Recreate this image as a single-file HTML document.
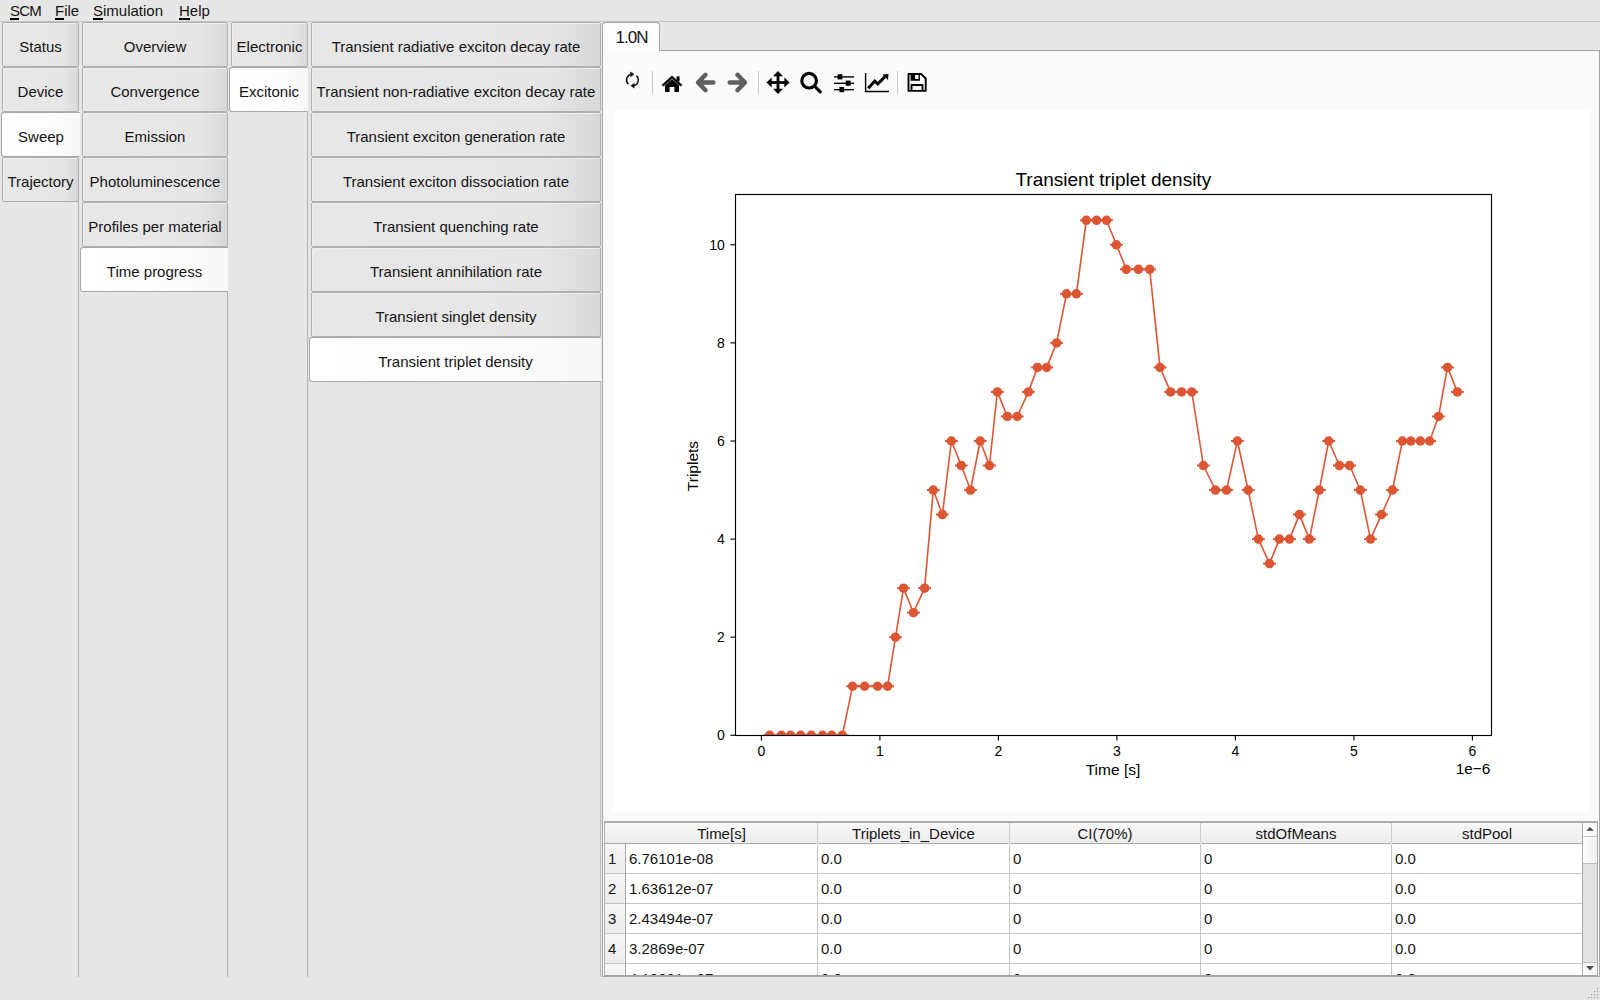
<!DOCTYPE html>
<html><head><meta charset="utf-8">
<style>
*{margin:0;padding:0;box-sizing:border-box}
html,body{width:1600px;height:1000px;overflow:hidden;background:#e6e6e6;font-family:"Liberation Sans",sans-serif;color:#141414}
#menubar{position:absolute;left:0;top:0;width:1600px;height:22px;background:#e6e6e6;border-bottom:1px solid #c4c4c4}
#menubar span{position:absolute;top:2px;font-size:15px;line-height:17px}
#menubar u{text-decoration:none;border-bottom:2px solid #000;display:inline-block;line-height:14px}
.tab{position:absolute;border:1px solid #b0b0b0;border-radius:2px;box-shadow:inset 1px 1px 0 #efefef;background:linear-gradient(to right,#e7e7e7 0%,#e6e6e6 80%,#d8d8d8 100%);display:flex;align-items:center;justify-content:center;font-size:15px;white-space:nowrap}
.tab span{position:relative;top:2px}
.tab.sel{background:linear-gradient(to right,#ffffff 0%,#fcfcfc 70%,#f7f7f7 100%);border-color:#a8a8a8;border-right:none;border-radius:3px 0 0 3px;box-shadow:none}
.vline{position:absolute;width:1px;background:#b2b2b2}
#panel{position:absolute;left:602px;top:50px;width:998px;height:927px;background:#fafafa;border:1px solid #a6a6a6}
#ptab{position:absolute;left:602px;top:22px;width:58px;height:29px;background:#fdfdfd;border:1px solid #a6a6a6;border-bottom:none;border-radius:4px 4px 0 0;font-size:17px;letter-spacing:-1px;text-align:center;line-height:28px;padding-top:1px;padding-left:1px}
#chart{position:absolute;left:613px;top:110px;width:976px;height:702px;background:#fff}
#table{position:absolute;left:604px;top:821px;width:994px;height:155px;border-left:1px solid #b0b0b0;border-right:1px solid #a8a8a8;border-top:2px solid #acacac;border-bottom:1px solid #a4a4a4;background:#fff;overflow:hidden}
.th{position:absolute;top:0;height:21px;font-size:15px;text-align:center;line-height:22px;background:linear-gradient(#f8f8f8,#ececec);border-bottom:1px solid #aaaaaa;white-space:nowrap}
.thsep{position:absolute;top:0;width:1px;height:20px;background:#cfcfcf}
.rh{position:absolute;left:0;width:20px;height:30px;background:linear-gradient(#f6f6f6,#ebebeb);font-size:15px;line-height:30px;padding-left:3px}
.td{position:absolute;height:29px;font-size:15px;line-height:30px;padding-left:3px;white-space:nowrap}
.hl{position:absolute;left:0;width:977px;height:1px;background:#c6c6c6}
.vl{position:absolute;top:21px;width:1px;height:140px;background:#c6c6c6}
#thcorner{display:none}
#sb{position:absolute;left:977px;top:0;width:15px;height:154px;background:#e2e2e2;border-left:1px solid #ababab}
#sb .b1{position:absolute;left:0;top:0;width:14px;height:14px;background:linear-gradient(to right,#fdfdfd,#f2f2f2);border-bottom:1px solid #c4c4c4}
#sb .h{position:absolute;left:0;top:14px;width:14px;height:27px;background:linear-gradient(to right,#fdfdfd,#f0f0f0);border-bottom:1px solid #c0c0c0}
#sb .b2{position:absolute;left:0;top:139px;width:14px;height:15px;background:linear-gradient(to right,#fdfdfd,#f2f2f2);border-top:1px solid #c0c0c0}
svg text{font-family:"Liberation Sans",sans-serif}
</style></head><body>
<div id="menubar">
<span style="left:10px;letter-spacing:-0.8px"><u>S</u>CM</span>
<span style="left:55px"><u>F</u>ile</span>
<span style="left:93px"><u>S</u>imulation</span>
<span style="left:179px"><u>H</u>elp</span>
</div>
<div class="vline" style="left:78px;top:200px;height:777px"></div>
<div class="vline" style="left:227px;top:290px;height:687px"></div>
<div class="vline" style="left:307px;top:110px;height:867px"></div>
<div class="vline" style="left:600px;top:380px;height:597px;background:#c0c0c0"></div>
<div class="tab" style="left:2px;top:22px;width:77px;height:45px;"><span>Status</span></div>
<div class="tab" style="left:2px;top:67px;width:77px;height:45px;"><span>Device</span></div>
<div class="tab sel" style="left:1px;top:112px;width:79px;height:45px;"><span>Sweep</span></div>
<div class="tab" style="left:2px;top:157px;width:77px;height:45px;"><span>Trajectory</span></div>
<div class="tab" style="left:82px;top:22px;width:146px;height:45px;"><span>Overview</span></div>
<div class="tab" style="left:82px;top:67px;width:146px;height:45px;"><span>Convergence</span></div>
<div class="tab" style="left:82px;top:112px;width:146px;height:45px;"><span>Emission</span></div>
<div class="tab" style="left:82px;top:157px;width:146px;height:45px;"><span>Photoluminescence</span></div>
<div class="tab" style="left:82px;top:202px;width:146px;height:45px;"><span>Profiles per material</span></div>
<div class="tab sel" style="left:80px;top:247px;width:148px;height:45px;"><span>Time progress</span></div>
<div class="tab" style="left:231px;top:22px;width:77px;height:45px;"><span>Electronic</span></div>
<div class="tab sel" style="left:229px;top:67px;width:79px;height:45px;"><span>Excitonic</span></div>
<div class="tab" style="left:311px;top:22px;width:290px;height:45px;"><span>Transient radiative exciton decay rate</span></div>
<div class="tab" style="left:311px;top:67px;width:290px;height:45px;"><span>Transient non-radiative exciton decay rate</span></div>
<div class="tab" style="left:311px;top:112px;width:290px;height:45px;"><span>Transient exciton generation rate</span></div>
<div class="tab" style="left:311px;top:157px;width:290px;height:45px;"><span>Transient exciton dissociation rate</span></div>
<div class="tab" style="left:311px;top:202px;width:290px;height:45px;"><span>Transient quenching rate</span></div>
<div class="tab" style="left:311px;top:247px;width:290px;height:45px;"><span>Transient annihilation rate</span></div>
<div class="tab" style="left:311px;top:292px;width:290px;height:45px;"><span>Transient singlet density</span></div>
<div class="tab sel" style="left:309px;top:337px;width:292px;height:45px;"><span>Transient triplet density</span></div>
<div id="panel"></div>
<div id="ptab">1.0N</div>
<div id="chart"></div>
<svg style="position:absolute;left:0;top:0" width="1600" height="1000" viewBox="0 0 1600 1000">
 <!-- toolbar -->
 <g fill="none" stroke="#c8c8c8" stroke-width="1"><line x1="652.5" y1="71" x2="652.5" y2="94"/><line x1="758.5" y1="71" x2="758.5" y2="94"/><line x1="897.5" y1="71" x2="897.5" y2="94"/></g>
 <!-- refresh -->
 <g fill="none" stroke="#111" stroke-width="1.5">
  <path d="M628.4,84.3 A5.9,5.9 0 0 1 631.6,74.2"/>
  <path d="M636.35,75.6 A5.9,5.9 0 0 1 633.2,85.8"/>
 </g>
 <g fill="#111"><path d="M630.3,71.6 L634.3,74.3 L630.3,77.3 Z"/><path d="M634.5,82.8 L630.5,85.7 L634.5,88.5 Z"/></g>
 <!-- home -->
 <g fill="#000">
  <path d="M661.6,85 L672,75.6 L682.4,85 L680.6,86.6 L672,78.8 L663.4,86.6 Z"/>
  <rect x="676.6" y="76.4" width="3" height="5"/>
  <path d="M665,85.4 L672,79.3 L679,85.4 L679,92 L674.4,92 L674.4,87 L669.6,87 L669.6,92 L665,92 Z"/>
 </g>
 <!-- back / forward -->
 <g fill="none" stroke="#5f5f5f" stroke-width="4.5" stroke-linecap="round" stroke-linejoin="round">
  <path d="M705.5,74.8 L698,82.5 L705.5,90.2 M698.5,82.5 L713.3,82.5"/>
  <path d="M737.5,74.8 L745,82.5 L737.5,90.2 M744.5,82.5 L729.7,82.5"/>
 </g>
 <!-- move -->
 <g fill="#000">
  <rect x="776.6" y="74" width="2.8" height="17"/>
  <rect x="769.5" y="81.1" width="17" height="2.8"/>
  <path d="M778,71 L783,76.2 L773,76.2 Z"/>
  <path d="M778,94 L783,88.8 L773,88.8 Z"/>
  <path d="M766.5,82.5 L771.7,77.5 L771.7,87.5 Z"/>
  <path d="M789.5,82.5 L784.3,77.5 L784.3,87.5 Z"/>
 </g>
 <!-- zoom -->
 <g fill="none" stroke="#000" stroke-width="3.1" stroke-linecap="round">
  <circle cx="809.1" cy="80.7" r="7.3"/>
  <line x1="814.6" y1="86.2" x2="820.2" y2="91.8"/>
 </g>
 <!-- sliders -->
 <g fill="#000">
  <rect x="834" y="76.2" width="20" height="1.4"/><rect x="837.6" y="74.2" width="4.8" height="5.2"/>
  <rect x="834" y="82.6" width="20" height="1.4"/><rect x="845.8" y="80.6" width="4.8" height="5.2"/>
  <rect x="834" y="89" width="20" height="1.4"/><rect x="839.4" y="87" width="4.8" height="5.2"/>
 </g>
 <!-- edit axes -->
 <g fill="none" stroke="#000">
  <path d="M865.6,73 L865.6,91.5 L889,91.5" stroke-width="1.4"/>
  <path d="M868.2,88.3 L874.8,81.2 L877.8,84 L885,76.6" stroke-width="3"/>
 </g>
 <path d="M882.5,74.5 L888.5,74 L888,80 Z" fill="#000"/>
 <!-- save -->
 <g fill="none" stroke="#000" stroke-width="1.9" stroke-linejoin="round">
  <path d="M908.5,74 L921.2,74 L925.7,78.5 L925.7,90.9 L908.5,90.9 Z"/>
  <path d="M911.5,90.9 L911.5,85 L922.5,85 L922.5,90.9"/>
 </g>
 <path d="M910.6,73.4 L919.9,73.4 L919.9,80.7 L910.6,80.7 Z M915.1,74.6 L918.5,74.6 L918.5,79 L915.1,79 Z" fill="#000" fill-rule="evenodd"/>
 <!-- chart -->
 <text x="1113.3" y="186" font-size="19" text-anchor="middle" fill="#000">Transient triplet density</text>
 <defs><clipPath id="ax"><rect x="735.5" y="194.5" width="756" height="541"/></clipPath></defs>
 <g clip-path="url(#ax)">
 <polyline points="769.7,735.3 781.4,735.3 790.6,735.3 800.7,735.3 811.3,735.3 822.5,735.3 831.7,735.3 842.3,735.3 852.6,686.2 864.6,686.2 877.6,686.2 887.6,686.2 895.5,637.2 903.5,588.1 913.5,612.7 924.6,588.1 933.3,490.0 942.4,514.6 951.4,441.0 961.3,465.5 970.5,490.0 980.2,441.0 989.4,465.5 997.4,391.9 1007.3,416.5 1017.2,416.5 1028.4,391.9 1037.5,367.4 1046.7,367.4 1056.6,342.9 1066.5,293.8 1076.4,293.8 1086.3,220.3 1096.6,220.3 1106.5,220.3 1116.4,244.8 1126.3,269.3 1138.4,269.3 1149.7,269.3 1160.0,367.4 1170.6,391.9 1181.6,391.9 1191.8,391.9 1203.4,465.5 1215.4,490.0 1226.5,490.0 1237.4,441.0 1248.1,490.0 1258.4,539.1 1269.5,563.6 1279.4,539.1 1289.5,539.1 1299.4,514.6 1309.4,539.1 1319.3,490.0 1328.7,441.0 1339.4,465.5 1349.6,465.5 1360.3,490.0 1370.5,539.1 1381.5,514.6 1392.5,490.0 1402.4,441.0 1410.9,441.0 1420.4,441.0 1429.7,441.0 1438.5,416.5 1447.5,367.4 1457.4,391.9" fill="none" stroke="#dd5634" stroke-width="1.6" stroke-linejoin="round"/>
 <g fill="#dd5634"><circle cx="769.70" cy="735.30" r="4.75"/><rect x="763.30" y="734.30" width="12.8" height="2"/><circle cx="781.40" cy="735.30" r="4.75"/><rect x="775.00" y="734.30" width="12.8" height="2"/><circle cx="790.60" cy="735.30" r="4.75"/><rect x="784.20" y="734.30" width="12.8" height="2"/><circle cx="800.70" cy="735.30" r="4.75"/><rect x="794.30" y="734.30" width="12.8" height="2"/><circle cx="811.30" cy="735.30" r="4.75"/><rect x="804.90" y="734.30" width="12.8" height="2"/><circle cx="822.50" cy="735.30" r="4.75"/><rect x="816.10" y="734.30" width="12.8" height="2"/><circle cx="831.70" cy="735.30" r="4.75"/><rect x="825.30" y="734.30" width="12.8" height="2"/><circle cx="842.30" cy="735.30" r="4.75"/><rect x="835.90" y="734.30" width="12.8" height="2"/><circle cx="852.60" cy="686.25" r="4.75"/><rect x="846.20" y="685.25" width="12.8" height="2"/><circle cx="864.60" cy="686.25" r="4.75"/><rect x="858.20" y="685.25" width="12.8" height="2"/><circle cx="877.60" cy="686.25" r="4.75"/><rect x="871.20" y="685.25" width="12.8" height="2"/><circle cx="887.60" cy="686.25" r="4.75"/><rect x="881.20" y="685.25" width="12.8" height="2"/><circle cx="895.50" cy="637.20" r="4.75"/><rect x="889.10" y="636.20" width="12.8" height="2"/><circle cx="903.50" cy="588.15" r="4.75"/><rect x="897.10" y="587.15" width="12.8" height="2"/><circle cx="913.50" cy="612.67" r="4.75"/><rect x="907.10" y="611.67" width="12.8" height="2"/><circle cx="924.60" cy="588.15" r="4.75"/><rect x="918.20" y="587.15" width="12.8" height="2"/><circle cx="933.30" cy="490.05" r="4.75"/><rect x="926.90" y="489.05" width="12.8" height="2"/><circle cx="942.40" cy="514.57" r="4.75"/><rect x="936.00" y="513.57" width="12.8" height="2"/><circle cx="951.40" cy="441.00" r="4.75"/><rect x="945.00" y="440.00" width="12.8" height="2"/><circle cx="961.30" cy="465.52" r="4.75"/><rect x="954.90" y="464.52" width="12.8" height="2"/><circle cx="970.50" cy="490.05" r="4.75"/><rect x="964.10" y="489.05" width="12.8" height="2"/><circle cx="980.20" cy="441.00" r="4.75"/><rect x="973.80" y="440.00" width="12.8" height="2"/><circle cx="989.40" cy="465.52" r="4.75"/><rect x="983.00" y="464.52" width="12.8" height="2"/><circle cx="997.40" cy="391.95" r="4.75"/><rect x="991.00" y="390.95" width="12.8" height="2"/><circle cx="1007.30" cy="416.47" r="4.75"/><rect x="1000.90" y="415.47" width="12.8" height="2"/><circle cx="1017.20" cy="416.47" r="4.75"/><rect x="1010.80" y="415.47" width="12.8" height="2"/><circle cx="1028.40" cy="391.95" r="4.75"/><rect x="1022.00" y="390.95" width="12.8" height="2"/><circle cx="1037.50" cy="367.42" r="4.75"/><rect x="1031.10" y="366.42" width="12.8" height="2"/><circle cx="1046.70" cy="367.42" r="4.75"/><rect x="1040.30" y="366.42" width="12.8" height="2"/><circle cx="1056.60" cy="342.90" r="4.75"/><rect x="1050.20" y="341.90" width="12.8" height="2"/><circle cx="1066.50" cy="293.85" r="4.75"/><rect x="1060.10" y="292.85" width="12.8" height="2"/><circle cx="1076.40" cy="293.85" r="4.75"/><rect x="1070.00" y="292.85" width="12.8" height="2"/><circle cx="1086.30" cy="220.27" r="4.75"/><rect x="1079.90" y="219.27" width="12.8" height="2"/><circle cx="1096.60" cy="220.27" r="4.75"/><rect x="1090.20" y="219.27" width="12.8" height="2"/><circle cx="1106.50" cy="220.27" r="4.75"/><rect x="1100.10" y="219.27" width="12.8" height="2"/><circle cx="1116.40" cy="244.80" r="4.75"/><rect x="1110.00" y="243.80" width="12.8" height="2"/><circle cx="1126.30" cy="269.32" r="4.75"/><rect x="1119.90" y="268.32" width="12.8" height="2"/><circle cx="1138.40" cy="269.32" r="4.75"/><rect x="1132.00" y="268.32" width="12.8" height="2"/><circle cx="1149.70" cy="269.32" r="4.75"/><rect x="1143.30" y="268.32" width="12.8" height="2"/><circle cx="1160.00" cy="367.42" r="4.75"/><rect x="1153.60" y="366.42" width="12.8" height="2"/><circle cx="1170.60" cy="391.95" r="4.75"/><rect x="1164.20" y="390.95" width="12.8" height="2"/><circle cx="1181.60" cy="391.95" r="4.75"/><rect x="1175.20" y="390.95" width="12.8" height="2"/><circle cx="1191.80" cy="391.95" r="4.75"/><rect x="1185.40" y="390.95" width="12.8" height="2"/><circle cx="1203.40" cy="465.52" r="4.75"/><rect x="1197.00" y="464.52" width="12.8" height="2"/><circle cx="1215.40" cy="490.05" r="4.75"/><rect x="1209.00" y="489.05" width="12.8" height="2"/><circle cx="1226.50" cy="490.05" r="4.75"/><rect x="1220.10" y="489.05" width="12.8" height="2"/><circle cx="1237.40" cy="441.00" r="4.75"/><rect x="1231.00" y="440.00" width="12.8" height="2"/><circle cx="1248.10" cy="490.05" r="4.75"/><rect x="1241.70" y="489.05" width="12.8" height="2"/><circle cx="1258.40" cy="539.10" r="4.75"/><rect x="1252.00" y="538.10" width="12.8" height="2"/><circle cx="1269.50" cy="563.62" r="4.75"/><rect x="1263.10" y="562.62" width="12.8" height="2"/><circle cx="1279.40" cy="539.10" r="4.75"/><rect x="1273.00" y="538.10" width="12.8" height="2"/><circle cx="1289.50" cy="539.10" r="4.75"/><rect x="1283.10" y="538.10" width="12.8" height="2"/><circle cx="1299.40" cy="514.57" r="4.75"/><rect x="1293.00" y="513.57" width="12.8" height="2"/><circle cx="1309.40" cy="539.10" r="4.75"/><rect x="1303.00" y="538.10" width="12.8" height="2"/><circle cx="1319.30" cy="490.05" r="4.75"/><rect x="1312.90" y="489.05" width="12.8" height="2"/><circle cx="1328.70" cy="441.00" r="4.75"/><rect x="1322.30" y="440.00" width="12.8" height="2"/><circle cx="1339.40" cy="465.52" r="4.75"/><rect x="1333.00" y="464.52" width="12.8" height="2"/><circle cx="1349.60" cy="465.52" r="4.75"/><rect x="1343.20" y="464.52" width="12.8" height="2"/><circle cx="1360.30" cy="490.05" r="4.75"/><rect x="1353.90" y="489.05" width="12.8" height="2"/><circle cx="1370.50" cy="539.10" r="4.75"/><rect x="1364.10" y="538.10" width="12.8" height="2"/><circle cx="1381.50" cy="514.57" r="4.75"/><rect x="1375.10" y="513.57" width="12.8" height="2"/><circle cx="1392.50" cy="490.05" r="4.75"/><rect x="1386.10" y="489.05" width="12.8" height="2"/><circle cx="1402.40" cy="441.00" r="4.75"/><rect x="1396.00" y="440.00" width="12.8" height="2"/><circle cx="1410.90" cy="441.00" r="4.75"/><rect x="1404.50" y="440.00" width="12.8" height="2"/><circle cx="1420.40" cy="441.00" r="4.75"/><rect x="1414.00" y="440.00" width="12.8" height="2"/><circle cx="1429.70" cy="441.00" r="4.75"/><rect x="1423.30" y="440.00" width="12.8" height="2"/><circle cx="1438.50" cy="416.47" r="4.75"/><rect x="1432.10" y="415.47" width="12.8" height="2"/><circle cx="1447.50" cy="367.42" r="4.75"/><rect x="1441.10" y="366.42" width="12.8" height="2"/><circle cx="1457.40" cy="391.95" r="4.75"/><rect x="1451.00" y="390.95" width="12.8" height="2"/></g>
 </g>
 <rect x="735.5" y="194.5" width="756" height="541" fill="none" stroke="#000" stroke-width="1.15"/>
 <g stroke="#000" stroke-width="1.1"><line x1="761.4" y1="735.4" x2="761.4" y2="740.4"/><line x1="879.9" y1="735.4" x2="879.9" y2="740.4"/><line x1="998.4" y1="735.4" x2="998.4" y2="740.4"/><line x1="1116.9" y1="735.4" x2="1116.9" y2="740.4"/><line x1="1235.4" y1="735.4" x2="1235.4" y2="740.4"/><line x1="1353.9" y1="735.4" x2="1353.9" y2="740.4"/><line x1="1472.4" y1="735.4" x2="1472.4" y2="740.4"/><line x1="730.4" y1="735.3" x2="735.4" y2="735.3"/><line x1="730.4" y1="637.2" x2="735.4" y2="637.2"/><line x1="730.4" y1="539.1" x2="735.4" y2="539.1"/><line x1="730.4" y1="441.0" x2="735.4" y2="441.0"/><line x1="730.4" y1="342.9" x2="735.4" y2="342.9"/><line x1="730.4" y1="244.8" x2="735.4" y2="244.8"/></g>
 <g font-size="14" fill="#000" text-anchor="middle"><text x="761.4" y="756">0</text><text x="879.9" y="756">1</text><text x="998.4" y="756">2</text><text x="1116.9" y="756">3</text><text x="1235.4" y="756">4</text><text x="1353.9" y="756">5</text><text x="1472.4" y="756">6</text></g>
 <g font-size="14" fill="#000" text-anchor="end"><text x="724.8" y="740.3">0</text><text x="724.8" y="642.2">2</text><text x="724.8" y="544.1">4</text><text x="724.8" y="446.0">6</text><text x="724.8" y="347.9">8</text><text x="724.8" y="249.8">10</text></g>
 <text x="1490.3" y="773.7" font-size="15.4" text-anchor="end" fill="#000">1e&#8722;6</text>
 <text x="1113" y="775" font-size="15.5" text-anchor="middle" fill="#000">Time [s]</text>
 <text transform="translate(698.2,466) rotate(-90)" font-size="15.5" text-anchor="middle" fill="#000">Triplets</text>
</svg>
<div id="table">
<div id="thcorner"></div>
<div class="th" style="left:0px;width:21px"></div>
<div class="th" style="left:21px;width:191px">Time[s]</div>
<div class="th" style="left:213px;width:191px">Triplets_in_Device</div>
<div class="thsep" style="left:212px"></div>
<div class="th" style="left:405px;width:190px">CI(70%)</div>
<div class="thsep" style="left:404px"></div>
<div class="th" style="left:596px;width:190px">stdOfMeans</div>
<div class="thsep" style="left:595px"></div>
<div class="th" style="left:787px;width:190px">stdPool</div>
<div class="thsep" style="left:786px"></div>
<div class="rh" style="top:21px">1</div>
<div class="td" style="left:21px;top:21px;width:191px">6.76101e-08</div>
<div class="td" style="left:213px;top:21px;width:191px">0.0</div>
<div class="td" style="left:405px;top:21px;width:190px">0</div>
<div class="td" style="left:596px;top:21px;width:190px">0</div>
<div class="td" style="left:787px;top:21px;width:190px">0.0</div>
<div class="hl" style="top:50px"></div>
<div class="rh" style="top:51px">2</div>
<div class="td" style="left:21px;top:51px;width:191px">1.63612e-07</div>
<div class="td" style="left:213px;top:51px;width:191px">0.0</div>
<div class="td" style="left:405px;top:51px;width:190px">0</div>
<div class="td" style="left:596px;top:51px;width:190px">0</div>
<div class="td" style="left:787px;top:51px;width:190px">0.0</div>
<div class="hl" style="top:80px"></div>
<div class="rh" style="top:81px">3</div>
<div class="td" style="left:21px;top:81px;width:191px">2.43494e-07</div>
<div class="td" style="left:213px;top:81px;width:191px">0.0</div>
<div class="td" style="left:405px;top:81px;width:190px">0</div>
<div class="td" style="left:596px;top:81px;width:190px">0</div>
<div class="td" style="left:787px;top:81px;width:190px">0.0</div>
<div class="hl" style="top:110px"></div>
<div class="rh" style="top:111px">4</div>
<div class="td" style="left:21px;top:111px;width:191px">3.2869e-07</div>
<div class="td" style="left:213px;top:111px;width:191px">0.0</div>
<div class="td" style="left:405px;top:111px;width:190px">0</div>
<div class="td" style="left:596px;top:111px;width:190px">0</div>
<div class="td" style="left:787px;top:111px;width:190px">0.0</div>
<div class="hl" style="top:140px"></div>
<div class="rh" style="top:141px"></div>
<div class="td" style="left:21px;top:141px;width:191px">4.10881e-07</div>
<div class="td" style="left:213px;top:141px;width:191px">0.0</div>
<div class="td" style="left:405px;top:141px;width:190px">0</div>
<div class="td" style="left:596px;top:141px;width:190px">0</div>
<div class="td" style="left:787px;top:141px;width:190px">0.0</div>
<div class="hl" style="top:170px"></div>
<div class="vl" style="left:20px;background:#a9a9a9"></div>
<div class="vl" style="left:212px;"></div>
<div class="vl" style="left:404px;"></div>
<div class="vl" style="left:595px;"></div>
<div class="vl" style="left:786px;"></div>
<div class="vl" style="left:977px;"></div>
<div id="sb"><div class="b1"></div><div class="h"></div><div class="b2"></div></div>
</div>
<svg style="position:absolute;left:0;top:0" width="1600" height="1000">
 <path d="M1586.3,830.8 L1593.8,830.8 L1590,827 Z" fill="#4a4a4a"/>
 <path d="M1586,966 L1594,966 L1590,970.5 Z" fill="#505050"/>
 <g fill="#a0a0a0">
  <rect x="1597" y="988" width="1.2" height="1.2"/>
  <rect x="1594" y="991" width="1.2" height="1.2"/><rect x="1597" y="991" width="1.2" height="1.2"/>
  <rect x="1591" y="994" width="1.2" height="1.2"/><rect x="1594" y="994" width="1.2" height="1.2"/><rect x="1597" y="994" width="1.2" height="1.2"/>
  <rect x="1588" y="997" width="1.2" height="1.2"/><rect x="1591" y="997" width="1.2" height="1.2"/><rect x="1594" y="997" width="1.2" height="1.2"/><rect x="1597" y="997" width="1.2" height="1.2"/>
 </g>
</svg>
</body></html>
